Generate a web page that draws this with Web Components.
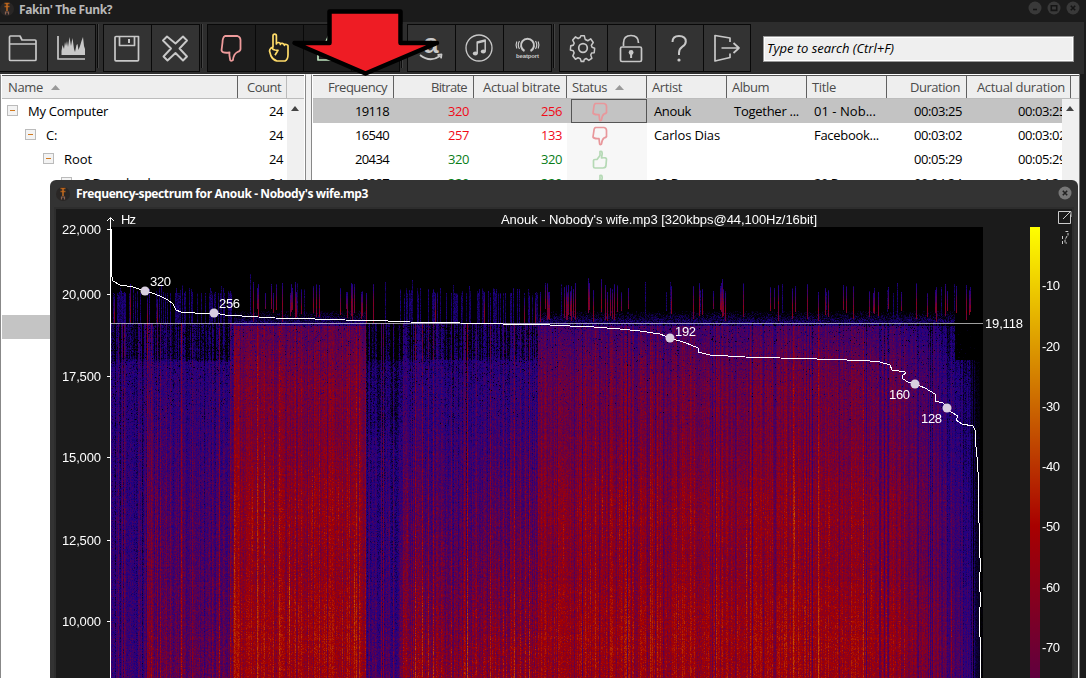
<!DOCTYPE html>
<html lang="en"><head><meta charset="utf-8"><title>Fakin' The Funk?</title>
<style>html,body{margin:0;width:1086px;height:678px;overflow:hidden;background:#1b1b1b}</style></head>
<body><funk-app></funk-app>
<script>
const def=(name,html,init)=>customElements.define(name,class extends HTMLElement{
  connectedCallback(){ if(this.shadowRoot)return;
    const t=document.createElement('template');
    t.innerHTML=typeof html==='function'?html(this):html;
    this.attachShadow({mode:'open'}).append(t.content.cloneNode(true));
    if(init)init(this,this.shadowRoot);}
});

/* Single-line text spaced to a given advance width */
def('ui-text','<style>:host{display:inline-block;white-space:pre;flex:none}</style><slot></slot>',el=>{
  const w=+el.getAttribute('w'), s=el.textContent; if(!w)return;
  const cs=getComputedStyle(el), c=document.createElement('canvas').getContext('2d');
  c.font=`${cs.fontStyle} ${cs.fontWeight} ${cs.fontSize} ${cs.fontFamily}`;
  el.style.letterSpacing=((w-c.measureText(s).width)/s.length).toFixed(3)+'px';
});

const ICON={
 folder:'<path d="M9.500 13q0-1 1-1h9.500l2 4H35q1 0 1 1V35.500q0 1-1 1H10.500q-1 0-1-1zM9.500 20h26.500"/>',
 chart:'<path d="M10 12v23h27"/><path fill="#c8c8c8" stroke="none" d="M13.500 31V27l1-6 1.500 4 1-7 1 4 1-5 1 6 1.500-10 1.500 9 1.500-8 1.500 11 1 3 1.500-7 1-1 1 6 1.500-4 1.500-5 1.500-4 1 9 1 3v6z"/>',
 save:'<path d="M12 13.500q0-1 1-1h22.500v23.500q0 .8-1 .8h-21.500q-1 0-1-1zM16.500 12.500v9h15v-9"/><path d="M26 15v4" stroke-width="2"/>',
 cross:'<path stroke-width="1.900" d="M15 12.500l8.500 7 7.500-7 4 4-7.500 8 7.500 8-4 4-7.500-7.500-8 7.500-4-4 7.500-8-8-8z"/>',
 down:'<path stroke-width="1.800" d="M18 12h12.500q3 1 3 4v9q0 2-3 3-4 2-4.500 8-3 2-3-1-1-4-.5-6.500-7 1-8-2l1-8q0-5 2.500-6.500z"/>',
 hand:'<path transform="translate(-1 0)" d="M18 23V12q0-1.800 1.700-1.800t1.700 1.800v8q0-1.500 2-1.500t2 2q0-1.500 2-1.200t2 2q0-1.200 2-.8t1.600 2.200v8q0 5-3 6.300h-8q-4-1-6-5l-1.500-5q0-1.500 1.500-3l2-1zM18 23q-2 2 2 3l3 .3-3 5"/>',
 up:'<path d="M14 24h5l6-13q4 0 3 5l-1 6h7l-2 14H14z"/>',
 note:'<g transform="translate(-1 0)"><circle cx="24" cy="24" r="13" stroke-width="1.300"/><g fill="#c8c8c8" stroke="none"><ellipse cx="20.300" cy="29.500" rx="2.500" ry="2"/><ellipse cx="28.300" cy="27.500" rx="2.500" ry="2"/></g><path stroke-width="1.500" d="M22.200 29.500V18l8-2v11.500"/><path d="M22.200 19l8-2"/></g>',
 gear:'<circle cx="24" cy="24" r="4.300"/><path transform="translate(24 24) scale(.87 .98) translate(-24 -24)" d="M21.500 11.500h4l1 3.700 3 1.300 3.300-1.800 3 3.600-2.200 3 .8 2 3 1-.5 4.500-3 .3-1 2 1.300 3.300-3.500 2.200-3-1.800-2.200.9-.6 2h-3l-1-2.700-2.600-1-3 1.400-3-3.400 1.500-3-1-2.200-3.300-.8.400-4.200 3-.7 1-2.100-1.800-3 3.300-3.300 3 1.700 2.200-1z"/>',
 lock:'<rect x="12.500" y="23" width="21" height="14.500" rx="1.500"/><path d="M15.500 22v-3q0-7.500 7.500-7.500T30.500 19"/><g fill="#c8c8c8" stroke="none"><circle cx="23.100" cy="28.500" r="2.400"/><path d="M22.100 29h2v5h-2z"/></g>',
 help:'<g transform="translate(-1 0)"><path stroke-width="2" d="M17.500 18q0-6 6.500-6 6.800 0 6.800 5.500 0 3-3.400 5.200Q24 25 24 29v2"/><circle cx="24" cy="36" r="1.600" fill="#c8c8c8" stroke="none"/></g>',
 exit:'<path d="M26 18v-4l-15-2.500v25.500l15-3.500v-4M17.500 24H34M29.500 19l5.500 5-5.500 5"/>',
 beat:'<path stroke-width="2" d="M20.500 27a6.500 6.500 0 1 1 6 0"/><path stroke-width="1.200" d="M15.500 17q-2.500 4 0 8M12.800 17.500q-1.500 4 0 7M31.500 17q2.500 4 0 8M34.200 17.500q1.500 4 0 7"/><text x="23.500" y="34" textLength="23" fill="#c8c8c8" stroke="none" font-family="Liberation Sans" font-weight="bold" font-size="6" text-anchor="middle">beatport</text>',
 amazon:'<text x="24" y="29" fill="#c8c8c8" stroke="none" font-family="Liberation Sans" font-weight="bold" font-size="27" text-anchor="middle">a</text><path stroke-width="1.800" d="M13 31q10 8 20 1M30.500 31l4-.6-.5 4"/>'
};
def('tool-button',el=>`<style>:host{display:block;width:48px;height:48px;box-sizing:border-box;border:solid #090909;border-width:1px 1px 1px 0;background:${el.hasAttribute('on')?'#1c1c1c':'#333'};flex:none}svg{display:block;overflow:visible;margin:-1px 0 0 ${el.hasAttribute('first')?-1:0}px}</style>
<svg width="48" height="48" fill="none" stroke="${el.getAttribute('color')||'#c8c8c8'}" stroke-width="1.700" stroke-linejoin="round">${ICON[el.getAttribute('icon')]||''}</svg>`);
def('tool-gap','<style>:host{display:block;width:8px;height:48px;flex:none;background:linear-gradient(#0b0b0b,#0b0b0b) 1px 0/1px 44px no-repeat,linear-gradient(#424242,#424242) 2px 0/1px 44px no-repeat}</style>');
def('app-mark','<style>:host{display:block;width:14px;height:14px;flex:none}svg{display:block}</style><svg width="14" height="14"><circle cx="7" cy="7" r="7" fill="#292625"/><path d="M4.500 1.500h5M4.500 4.500h5" stroke="#a85a18" stroke-width="1.300"/><path d="M7 1v8" stroke="#c46d20" stroke-width="1.500"/><path d="M5.500 12.500V10h3v2.500" fill="none" stroke="#8b6252" stroke-width="1.200"/></svg>');
def('round-button',el=>{const g={min:'M5 8.500h4',max:'M4.300 4.800h5.400v4.600H4.300z',close:'M4.800 4.800l4.400 4.400M9.200 4.800l-4.400 4.400'}[el.getAttribute('kind')],l=el.hasAttribute('lit');
 return `<style>:host{display:block;width:14px;height:14px}svg{display:block}</style><svg width="14" height="14"><circle cx="7" cy="7" r="6.500" fill="${l?'#777':'#393939'}"/><path d="${g}" fill="none" stroke="${l?'#222':'#151515'}" stroke-width="1.600"/></svg>`});

def('title-bar',`<style>:host{display:flex;height:22px;background:#1b1b1b;box-sizing:border-box;padding:1px 6px 0 0;font:bold 12px "Open Sans",sans-serif;color:#b9b9b9}
app-mark{margin:1px 5px 0 0}ui-text{line-height:17px}.b{margin-left:auto;display:flex;gap:5px}</style><app-mark></app-mark><ui-text w="93">Fakin' The Funk?</ui-text><div class="b"><round-button kind="min"></round-button><round-button kind="max"></round-button><round-button kind="close"></round-button></div>`);

def('tool-bar',`<style>:host{display:flex;height:52px;box-sizing:border-box;padding-top:2px;background:#2d2d2d;width:1084px}
.s{margin:12px 0 0 12px;width:311px;height:26px;box-sizing:border-box;border:1px solid #999;outline:1px solid #fff;outline-offset:-2px;background:#efefef;padding-left:3px;font:italic 13px/22px "Open Sans",sans-serif;color:#000}</style>
<tool-button icon="folder" style="width:48px"></tool-button><tool-button icon="chart"></tool-button><tool-gap style="width:7px"></tool-gap>
<tool-button icon="save" first style="border-left-width:1px;width:49px"></tool-button><tool-button icon="cross"></tool-button><tool-gap style="width:7px"></tool-gap>
<tool-button icon="down" first on color="#ee9b9b" style="border-left-width:1px;width:49px"></tool-button><tool-button icon="hand" on color="#ffdc69"></tool-button><tool-button icon="up" on color="#bfe3bf"></tool-button><tool-button on></tool-button><tool-gap style="width:7px"></tool-gap>
<tool-button icon="amazon" first style="border-left-width:1px;width:49px"></tool-button><tool-button icon="note"></tool-button><tool-button icon="beat"></tool-button><tool-gap style="width:7px"></tool-gap>
<tool-button icon="gear" first style="border-left-width:1px;width:49px"></tool-button><tool-button icon="lock"></tool-button><tool-button icon="help"></tool-button><tool-button icon="exit" style="width:47px"></tool-button>
<div class="s"><ui-text w="127">Type to search (Ctrl+F)</ui-text></div>`);

def('sort-mark','<style>:host{display:inline-block;margin-left:8px;width:9px;height:5px;vertical-align:2px;background:#999;clip-path:polygon(0 100%,50% 0,100% 100%)}</style>');
const cellCss=`*,:host{box-sizing:border-box}:host{display:block;font:13px/24px "Open Sans",sans-serif;color:#000}
.h,.r{display:flex;height:24px}.h{border-top:1px solid #555;border-bottom:1px solid #bcbcbc;background:#eee;color:#4b4b4b;line-height:23px}
.h>*{border-right:1px solid #606060;flex:none}.e{text-align:right}.c{flex:none;white-space:nowrap;overflow:hidden}`;

def('folder-tree',`<style>${cellCss}:host{width:306px;height:604px;background:#fff;border:1px solid #888;border-top-color:#fff;border-width:1px 1px 0 1px;padding:0 1px;flex:none;overflow:hidden}
.h .n{width:236px;padding-left:6px}.h .k{width:49px;padding-right:5px;border-color:#bbb}.r{width:285px;align-items:center}.x{width:11px;height:11px;flex:none;border:1px solid #bbb;background:linear-gradient(#d27a20,#d27a20) 2px 4px/5px 1px no-repeat #f3f3f3;margin:-2px 10px 0 5px}
.r .k{margin-left:auto;padding-right:4px;box-sizing:content-box}.b{display:flex}.sb{width:17px;height:580px;background:#f0f0f0;flex:none;padding:7px 0 0 4px}.sb i{display:block;width:8px;height:5px;background:#444;clip-path:polygon(0 100%,50% 0,100% 100%)}.sel{margin-top:120px;background:#c4c4c4}</style>
<div class="h"><div class="n"><ui-text w="35">Name</ui-text><sort-mark></sort-mark></div><div class="e k"><ui-text w="34">Count</ui-text></div></div>
<div class="b"><div>
<div class="r"><i class="x"></i><ui-text w="80">My Computer</ui-text><ui-text class="k" w="14">24</ui-text></div>
<div class="r" style="padding-left:18px"><i class="x"></i><ui-text w="11">C:</ui-text><ui-text class="k" w="14">24</ui-text></div>
<div class="r" style="padding-left:36px"><i class="x"></i><ui-text w="28">Root</ui-text><ui-text class="k" w="14">24</ui-text></div>
<div class="r" style="padding-left:54px"><i class="x"></i><ui-text w="74">C Downloads</ui-text><ui-text class="k" w="14">24</ui-text></div>
<div class="r sel"></div></div><div class="sb"><i></i></div></div>`);

def('vote-mark',el=>`<style>:host{display:inline-block;width:16px;height:20px;vertical-align:top}svg{display:block}</style><svg width="16" height="20" fill="none" stroke-width="1.700" stroke-linejoin="round" ${el.hasAttribute('up')?'stroke="#b5d9b5"><path d="M1.500 10.500q0-1 1.500-1h2l3-4V1.500q2-1 2.200 2L9.500 8q5-.8 5 1l-.5 6q0 3-3 3H3q-1.500 0-1.500-1.500z"/>':'stroke="#e8979b"><path d="M3.500 1.500H12q2.500.5 2.500 3v6q-.5 1-2.500 1.500-2 1.500-2.500 6-2 1.500-2-1L7 12.500q-5 .5-6-1.500l.8-5.500q.2-3.500 1.700-4z"/>'}</svg>`);

const W=[81,80,93,80,80,80,80,80,104];
const H=[['Frequency',59,1],['Bitrate',36,1],['Actual bitrate',77,1],['Status',35],['Artist',30],['Album',37],['Title',24],['Duration',50,1],['Actual duration',88,1]];
const R=[['19118',['320','r'],['256','r'],'d',['Anouk',37],['Together ...',65],['01 - Nob...',62],'00:03:25'],
['16540',['257','r'],['133','r'],'d',['Carlos Dias',66],null,['Facebook...',65],'00:03:02'],
['20434',['320','g'],['320','g'],'u',null,null,null,'00:05:29'],
['18887',['320','g'],['320','g'],'u',['20 P',24],null,['20 P',24],'00:04:34']];
def('track-table',()=>{
 const cell=(i,h,c='',p='')=>`<div class="c ${c}" style="width:${W[i]}px;${p}">${h}</div>`;
 const head=H.map((h,i)=>`<div class="${h[2]?'e':''}" style="width:${W[i]}px;padding:0 ${i==8?5:6}px 0 5px"><ui-text w="${h[1]}">${h[0]}</ui-text>${h[0]=='Status'?'<sort-mark></sort-mark>':''}</div>`).join('');
 const rows=R.map((r,n)=>`<div class="r ${n?'':'on'}">`+
  cell(0,`<ui-text w="34">${r[0]}</ui-text>`,'e','padding-right:5px')+
  cell(1,`<ui-text w="21">${r[1][0]}</ui-text>`,'e '+r[1][1],'padding-right:5px')+
  cell(2,`<ui-text w="21">${r[2][0]}</ui-text>`,'e '+r[2][1]+' w','padding-right:5px')+
  cell(3,`<vote-mark ${r[3]=='u'?'up':''}></vote-mark>`,'st')+
  [4,5,6].map(i=>cell(i,r[i]?`<ui-text w="${r[i][1]}">${r[i][0]}</ui-text>`:'','','padding-left:7px')).join('')+
  cell(7,`<ui-text w="48">${r[7]}</ui-text>`,'e','padding-right:5px')+
  cell(8,`<ui-text w="48">${r[7]}</ui-text>`,'','padding-left:51px')+'</div>').join('');
 return `<style>${cellCss}:host{height:604px;flex:1;background:#fff;border:1px solid #888;border-top-color:#fff;border-width:1px 0 0 1px;padding-left:1px;overflow:hidden}
 .on{background:#c3c3c3}.r{width:749px;overflow:hidden}.c.r{display:block;color:#f00a18;height:24px;width:80px}.g{color:#087d17}
 .st{background:#f7f7f7;padding:3px 0 0 25px}.on .st{background:#c3c3c3;border:1px solid #555;width:76px!important;margin-left:4px;padding:2px 0 0 20px}
 .b{display:flex}.sb{width:17px;height:580px;background:#f0f0f0;flex:none;padding:7px 0 0 4px}.sb i{display:block;width:8px;height:5px;background:#444;clip-path:polygon(0 100%,50% 0,100% 100%)}</style>
 <div class="h">${head}</div><div class="b"><div>${rows}</div><div class="sb"><i></i></div></div>`});

def('spectrum-view',()=>{
 const T=(x,y,s,w,a='')=>`<text x="${x}" y="${y}" textLength="${w}" ${a}>${s}</text>`;
 const hz=[[22000,229],[20000,294],[17500,376],[15000,457],[12500,540],[10000,621]];
 return `<style>:host{display:block;position:relative;height:469px;background:#1b1b1b;overflow:hidden}canvas{position:absolute;left:55px;top:18px}svg{position:absolute;left:0;top:0}text{font:13px "Liberation Sans",sans-serif;fill:#fff}</style>
 <canvas width="872" height="451"></canvas>
 <svg width="1016" height="469" viewBox="56 209 1016 469"><defs><linearGradient id="g" gradientUnits="userSpaceOnUse" x1="0" y1="227" x2="0" y2="678"><stop stop-color="#ff0"/><stop offset=".663" stop-color="#a80000"/><stop offset="1" stop-color="#60003f"/></linearGradient></defs>
 <rect x="1030" y="227" width="10" height="451" fill="url(#g)"/>
 <path d="M110.500 218V678" stroke="#fff" stroke-width="1"/><path d="M107 221l3.500-3.500 3.500 3.500" stroke="#fff" fill="none"/>
 ${hz.map(([v,y])=>`<path d="M107 ${y+.5}h4" stroke="#fff"/>`+T(62,y+5,v.toLocaleString('en-US'),39)).join('')}
 ${T(121,224,'Hz',15)}${T(501,224,"Anouk - Nobody's wife.mp3 [320kbps@44,100Hz/16bit]",316)}
 <path d="M111 323.500H983" stroke="#fff" stroke-opacity=".62" stroke-width="1"/>${T(985,328,'19,118',38)}
 <path shape-rendering="crispEdges" fill="none" stroke="#fff" stroke-width="1" d="M111.500 229V275L113 281l7 4 13 2 12 4 7 2 8 3 8 4 5 4 3 6 5 2 14 1h19l11 2 25 1.500 25 1.500 25 .5 45 1.500 43 1 22 1 30 .5 40 1 45 1 25 .5 20 1 24 1 26 2 20 2 20 3 10 4 16 5 12 5v4l12 3 35 2 35 1 55 1.500 35 1.500 10 1 10 3 2 5 13 2 1 1-4 3 1 3 5 3 7 2 10 4 10 6v7l8 2 4 5 4 4 7 4-2 4 6 4 11 2 2 4V442l1 5v9l2 2-1 4 1 10v12l1 15-1 12 1 12v15l1 20v14l-1 10 1 10v15l-1 15 1 15V678"/>
 ${[[145,291],[214,313],[670,338],[915,384],[947,408]].map(p=>`<circle cx="${p[0]}" cy="${p[1]}" r="4.500" fill="#d8cee0"/>`).join('')}
 ${T(150,286,'320',21)}${T(219,308,'256',21)}${T(675,336,'192',21)}${T(889,399,'160',21)}${T(921,423,'128',21)}
 ${[10,20,30,40,50,60,70].map((v,i)=>T(1042,[290,351,411,471,531,592,652][i],'-'+v,18)).join('')}
 <g fill="none" stroke="#ccc"><path d="M1067 211.500h-8.500v12h12v-9"/><path d="M1063 219l7-7M1065.500 211.500h5.500v5.500"/><path d="M1065.500 231.500h2.500v4M1067 236l-2 4v3h2M1062.500 236v3M1062.500 241v3" stroke-dasharray="3 1"/></g></svg>`},
(el,root)=>{
 const cv=root.querySelector('canvas'),w=cv.width,h=cv.height,c=cv.getContext('2d'),im=c.createImageData(w,h);
 let seed=19118;const rnd=()=>{seed=(seed+0x6D2B79F5)|0;let t=Math.imul(seed^seed>>>15,1|seed);t=t+Math.imul(t^t>>>7,61|t)^t;return((t^t>>>14)>>>0)/4294967296};
 const lerp=(p,v)=>{if(v<=p[0][0])return p[0][1];for(let i=1;i<p.length;i++)if(v<=p[i][0]){const a=p[i-1],b=p[i];return a[1]+(b[1]-a[1])*(v-a[0])/(b[0]-a[0])}return p[p.length-1][1]};
 const pal=[[0,0,0],[30,0,134],[92,0,78],[165,0,0],[205,105,0],[255,230,0]];
 const prof={a:[[323,.4],[358,.4],[362,.95],[450,1.05],[678,1.35]],b:[[323,.55],[358,.55],[362,1.15],[450,1.5],[678,2.05]],
  c:[[323,2],[360,2.15],[450,2.45],[678,2.88]],d:[[323,.05],[358,.05],[362,.6],[420,.7],[450,1],[560,1.15],[678,1.6]],
  e:[[323,.55],[356,.6],[362,1.05],[450,1.5],[560,2],[678,2.6]],f:[[323,1.65],[360,1.95],[450,2.33],[560,2.6],[678,2.85]]};
 const reg=x=>x<148?'a':x<234?'b':x<366?'c':x<400?'d':x<538?'e':'f';
 const rowN=Array.from({length:h},()=>rnd()-.5);
 for(let x=0;x<w;x++){
  const X=x+111,k=reg(X),p=prof[k],strong=k=='c'||k=='f';
  let cn=(rnd()+rnd()+rnd()-1.5)*(strong?.4:.5); if(rnd()<.09)cn+=strong?.35:.85; if(k=='f'&&rnd()<.08)cn-=.6;
  const hot=rnd()<(strong?.035:.02), hy=500+rnd()*130, hb=.6+rnd()*.7;
  const spike=rnd()<(strong?.2:k=='d'?.2:k=='a'?.6:.4), top=(k=='a'||k=='b'||k=='e'?287:281)+rnd()*12-(rnd()<.05?8:0), red=rnd()<(strong?.8:.17), end=strong?308+rnd()*14:323;
  const edge=lerp([[870,0],[925,.4],[955,1],[970,1.4],[978,2],[983,2.7]],X);
  const cut=X>954?360:0;
  for(let y=0;y<h;y++){
   const Y=y+227;let v=0,n=(rnd()+rnd()-1);
   if(Y<323){
     if(spike&&Y>top&&Y<end&&X<972)v=(red?Math.min(2.4,.8+(Y-top)*.09):.7+cn*.2)+n*.45;
     if(strong&&Y>310&&X<955)v=Math.max(v,((Y-310)/15)+n*.6-.15);
     if(Y>292&&!strong&&spike)v=Math.max(v,.55+n*.7);
   } else {
     let base=lerp(p,Y); if(strong)base+=Math.sin(Y/19)*.06; if(Y<326&&strong)base-=.8;
     v=base+cn*(Y<360&&!strong?1.7:1)+n*(strong?.5:.6)+rowN[y]*.12-edge;
     if(Y<430&&rnd()<.05*(430-Y)/100)v-=1.1;
     if(Y<cut)v=rnd()<.03?v*.3:0;
     if(X>955)v*=Math.max(.1,Math.min(1,(985-X)/20));
     if(hot&&Math.abs(Y-hy)<85)v+=hb*(1-Math.abs(Y-hy)/100)*(rnd()*.7+.3);
   }
   v=Math.max(0,Math.min(4.3,v));if(v>3)v=3+(v-3)*.8;const i=v|0,f=v-i,o=(y*w+x)*4;
   for(let q=0;q<3;q++)im.data[o+q]=pal[i][q]*(1-f)+pal[i+1][q]*f; im.data[o+3]=255;
  }
 }
 c.putImageData(im,0,0);
});

def('spectrum-window',`<style>:host{display:block;position:absolute;left:50px;top:180px;width:1028px;height:498px;box-sizing:border-box;background:#333;border-radius:6px 6px 0 0;padding:0 6px;overflow:hidden}
.t{height:27px;display:flex;align-items:center;font:bold 12px "Open Sans",sans-serif;color:#fff}app-mark{margin-right:6px}round-button{margin:-2px 0 0 auto}.b{outline:2px solid #2d2d2d;margin-top:2px}</style>
<div class="t"><app-mark></app-mark><ui-text w="292">Frequency-spectrum for Anouk - Nobody's wife.mp3</ui-text><round-button kind="close" lit></round-button></div><div class="b"><spectrum-view></spectrum-view></div>`);

def('red-arrow','<style>:host{display:block;position:absolute;left:290px;top:8px}svg{display:block}</style><svg width="152" height="70" viewBox="290 8 152 70"><path d="M329.500 11.500H400.500V43H437L365.500 73.500L294.500 43H329.500Z" fill="#ee1c24" stroke="#000" stroke-width="4.500" stroke-linejoin="round"/></svg>');

def('funk-app',`<style>:host{display:block;position:relative;width:1086px;height:678px;background:#1b1b1b;overflow:hidden}
.m{display:flex;width:1080px;height:604px;background:#f0f0f0;border-right:1px solid #777;box-sizing:border-box;gap:5px}</style>
<title-bar></title-bar><tool-bar></tool-bar><div class="m"><folder-tree></folder-tree><track-table></track-table></div><spectrum-window></spectrum-window><red-arrow></red-arrow>`);
</script></body></html>
